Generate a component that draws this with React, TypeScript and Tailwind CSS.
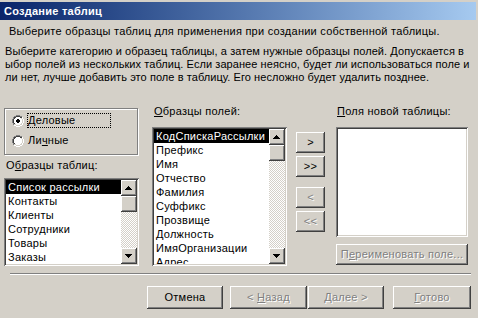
import React from "react";

const SUNKEN =
  "shadow-[inset_1px_1px_#808080,inset_-1px_-1px_#ffffff,inset_2px_2px_#404040,inset_-2px_-2px_#d4d0c8]";
const RAISED =
  "shadow-[inset_-1px_-1px_#404040,inset_1px_1px_#ffffff,inset_-2px_-2px_#808080,inset_2px_2px_#d4d0c8]";
const DISABLED = "text-[#808080] [text-shadow:1px_1px_0_#ffffff]";

function Arrow({ up }: { up: boolean }) {
  const rows = up
    ? [
        [7, 6, 1],
        [6, 7, 3],
        [5, 8, 5],
        [4, 9, 7],
      ]
    : [
        [4, 6, 7],
        [5, 7, 5],
        [6, 8, 3],
        [7, 9, 1],
      ];
  return (
    <svg width="16" height="16" viewBox="0 0 16 16" shapeRendering="crispEdges" className="block">
      {rows.map(([x, y, w], i) => (
        <rect key={i} x={x} y={y} width={w} height={1} fill="#000" />
      ))}
    </svg>
  );
}

function ScrollBar() {
  return (
    <div className="w-[16px] flex flex-col h-full shrink-0">
      <div className={`w-[16px] h-[16px] bg-[#d4d0c8] ${RAISED}`}>
        <Arrow up />
      </div>
      <div className={`w-[16px] h-[16px] bg-[#d4d0c8] ${RAISED}`} />
      <div className="flex-1 bg-[image:repeating-conic-gradient(#ffffff_0_25%,#d4d0c8_0_50%)] bg-[length:2px_2px]" />
      <div className={`w-[16px] h-[16px] bg-[#d4d0c8] ${RAISED}`}>
        <Arrow up={false} />
      </div>
    </div>
  );
}

function ListBox({ items, className }: { items: string[]; className: string }) {
  return (
    <div className={`bg-white p-[2px] ${SUNKEN} ${className}`}>
      <div className="flex h-full overflow-hidden">
        <div className="flex-1 overflow-hidden">
          {items.map((t, i) => (
            <div
              key={t}
              className={`h-[14px] leading-[14px] pl-[2px] whitespace-nowrap ${
                i === 0 ? "bg-black text-white" : "text-black"
              }`}
            >
              {t}
            </div>
          ))}
        </div>
        <ScrollBar />
      </div>
    </div>
  );
}

function Radio({ checked }: { checked: boolean }) {
  return (
    <svg width="12" height="12" viewBox="0 0 12 12" shapeRendering="crispEdges" className="block shrink-0">
      <path d="M4 0h4v1H4zM2 1h2v1H2zM8 1h2v1H8zM1 2h1v2H1zM0 4h1v4H0zM1 8h1v2H1z" fill="#808080" />
      <path d="M10 2h1v2h-1zM11 4h1v4h-1zM10 8h1v2h-1zM8 10h2v1H8zM2 10h2v1H2zM4 11h4v1H4z" fill="#ffffff" />
      <path d="M4 1h4v1H4zM2 2h2v1H2zM8 2h2v1H8zM2 3h1v1H2zM1 4h1v4H1zM2 8h1v1H2z" fill="#404040" />
      <path d="M9 3h1v1H9zM10 4h1v4h-1zM9 8h1v1H9zM8 9h2v1H8zM2 9h2v1H2zM4 10h4v1H4z" fill="#d4d0c8" />
      <path d="M4 2h4v1H4zM3 3h6v1H3zM2 4h8v4H2zM3 8h6v1H3zM4 9h4v1H4z" fill="#ffffff" />
      {checked && <path d="M5 4h2v1H5zM4 5h4v2H4zM5 7h2v1H5z" fill="#000" />}
    </svg>
  );
}

function Btn({
  children,
  className,
  disabled,
}: {
  children: React.ReactNode;
  className: string;
  disabled?: boolean;
}) {
  return (
    <div
      className={`bg-[#d4d0c8] ${RAISED} flex items-center justify-center whitespace-nowrap ${
        disabled ? DISABLED : "text-black"
      } ${className}`}
    >
      {children}
    </div>
  );
}

export default function App() {
  const tables = ["Список рассылки", "Контакты", "Клиенты", "Сотрудники", "Товары", "Заказы"];
  const fields = [
    "КодСпискаРассылки",
    "Префикс",
    "Имя",
    "Отчество",
    "Фамилия",
    "Суффикс",
    "Прозвище",
    "Должность",
    "ИмяОрганизации",
    "Адрес",
  ];
  return (
    <div className="w-[478px] h-[318px] bg-[#d4d0c8] overflow-hidden flex flex-col font-['Liberation_Sans',Arial,sans-serif] text-[11px] leading-[13px] tracking-[0.25px] text-black">
      <div className="mt-[2px] mr-[2px] h-[18px] flex items-center pl-[4px] bg-linear-to-r from-[#0a246a] to-[#a6caf0] font-bold text-white">
        Создание таблиц
      </div>

      <div className="mt-[5px] pl-[9px] whitespace-nowrap">
        Выберите образцы таблиц для применения при создании собственной таблицы.
      </div>
      <div className="mt-[7px] pl-[5px] whitespace-nowrap tracking-[0.07px]">
        Выберите категорию и образец таблицы, а затем нужные образцы полей. Допускается в
        <br />
        ыбор полей из нескольких таблиц. Если заранее неясно, будет ли использоваться поле и
        <br />
        ли нет, лучше добавить это поле в таблицу. Его несложно будет удалить позднее.
      </div>

      <div className="mt-[21px] flex items-start pl-[4px]">
        <div className="w-[135px] flex flex-col">
          <div className="mt-[3px] h-[47px] w-[134px] border border-[#808080] shadow-[inset_1px_1px_#ffffff,1px_1px_#ffffff] pl-[7px] pt-[4px] flex flex-col">
            <div className="h-[15px] flex items-center">
              <Radio checked />
              <div className="ml-[3px] w-[84px] h-[15px] border border-dotted border-black flex items-center">
                <span>
                  <span className="underline">Д</span>еловые
                </span>
              </div>
            </div>
            <div className="mt-[5px] h-[15px] flex items-center">
              <Radio checked={false} />
              <span className="ml-[4px]">
                Ли<span className="underline">ч</span>ные
              </span>
            </div>
          </div>
          <div className="mt-[4px] pl-[2px]">
            О<span className="underline">б</span>разцы таблиц:
          </div>
          <ListBox items={tables} className="mt-[6px] h-[88px] w-[135px]" />
        </div>

        <div className="ml-[13px] w-[135px] flex flex-col">
          <div className="pl-[2px]">
            <span className="underline">О</span>бразцы полей:
          </div>
          <ListBox items={fields} className="mt-[9px] h-[139px] w-[135px]" />
        </div>

        <div className="ml-[9px] w-[29px] flex flex-col mt-[27px]">
          <Btn className="h-[21px]">&gt;</Btn>
          <Btn className="h-[21px] mt-[3px]">&gt;&gt;</Btn>
          <Btn className="h-[21px] mt-[10px]" disabled>
            &lt;
          </Btn>
          <Btn className="h-[21px] mt-[3px]" disabled>
            &lt;&lt;
          </Btn>
        </div>

        <div className="ml-[11px] w-[132px] flex flex-col">
          <div className="pl-[1px]">
            <span className="underline">П</span>оля новой таблицы:
          </div>
          <div className={`mt-[9px] h-[110px] bg-white ${SUNKEN}`} />
          <Btn className="mt-[7px] h-[21px]" disabled>
            <span>
              П<span className="underline">е</span>реименовать поле...
            </span>
          </Btn>
        </div>
      </div>

      <div className="mt-[7px] ml-[10px] mr-[7px] h-[2px] border-t border-[#808080] border-b border-b-white" />

      <div className="mt-[11px] flex justify-end pr-[7px]">
        <Btn className="w-[76px] h-[23px]">Отмена</Btn>
        <Btn className="ml-[7px] w-[77px] h-[23px]" disabled>
          <span>
            &lt; <span className="underline">Н</span>азад
          </span>
        </Btn>
        <Btn className="ml-[1px] w-[76px] h-[23px]" disabled>
          <span>
            <span className="underline">Д</span>алее &gt;
          </span>
        </Btn>
        <Btn className="ml-[9px] w-[78px] h-[23px]" disabled>
          <span>
            <span className="underline">Г</span>отово
          </span>
        </Btn>
      </div>
    </div>
  );
}
